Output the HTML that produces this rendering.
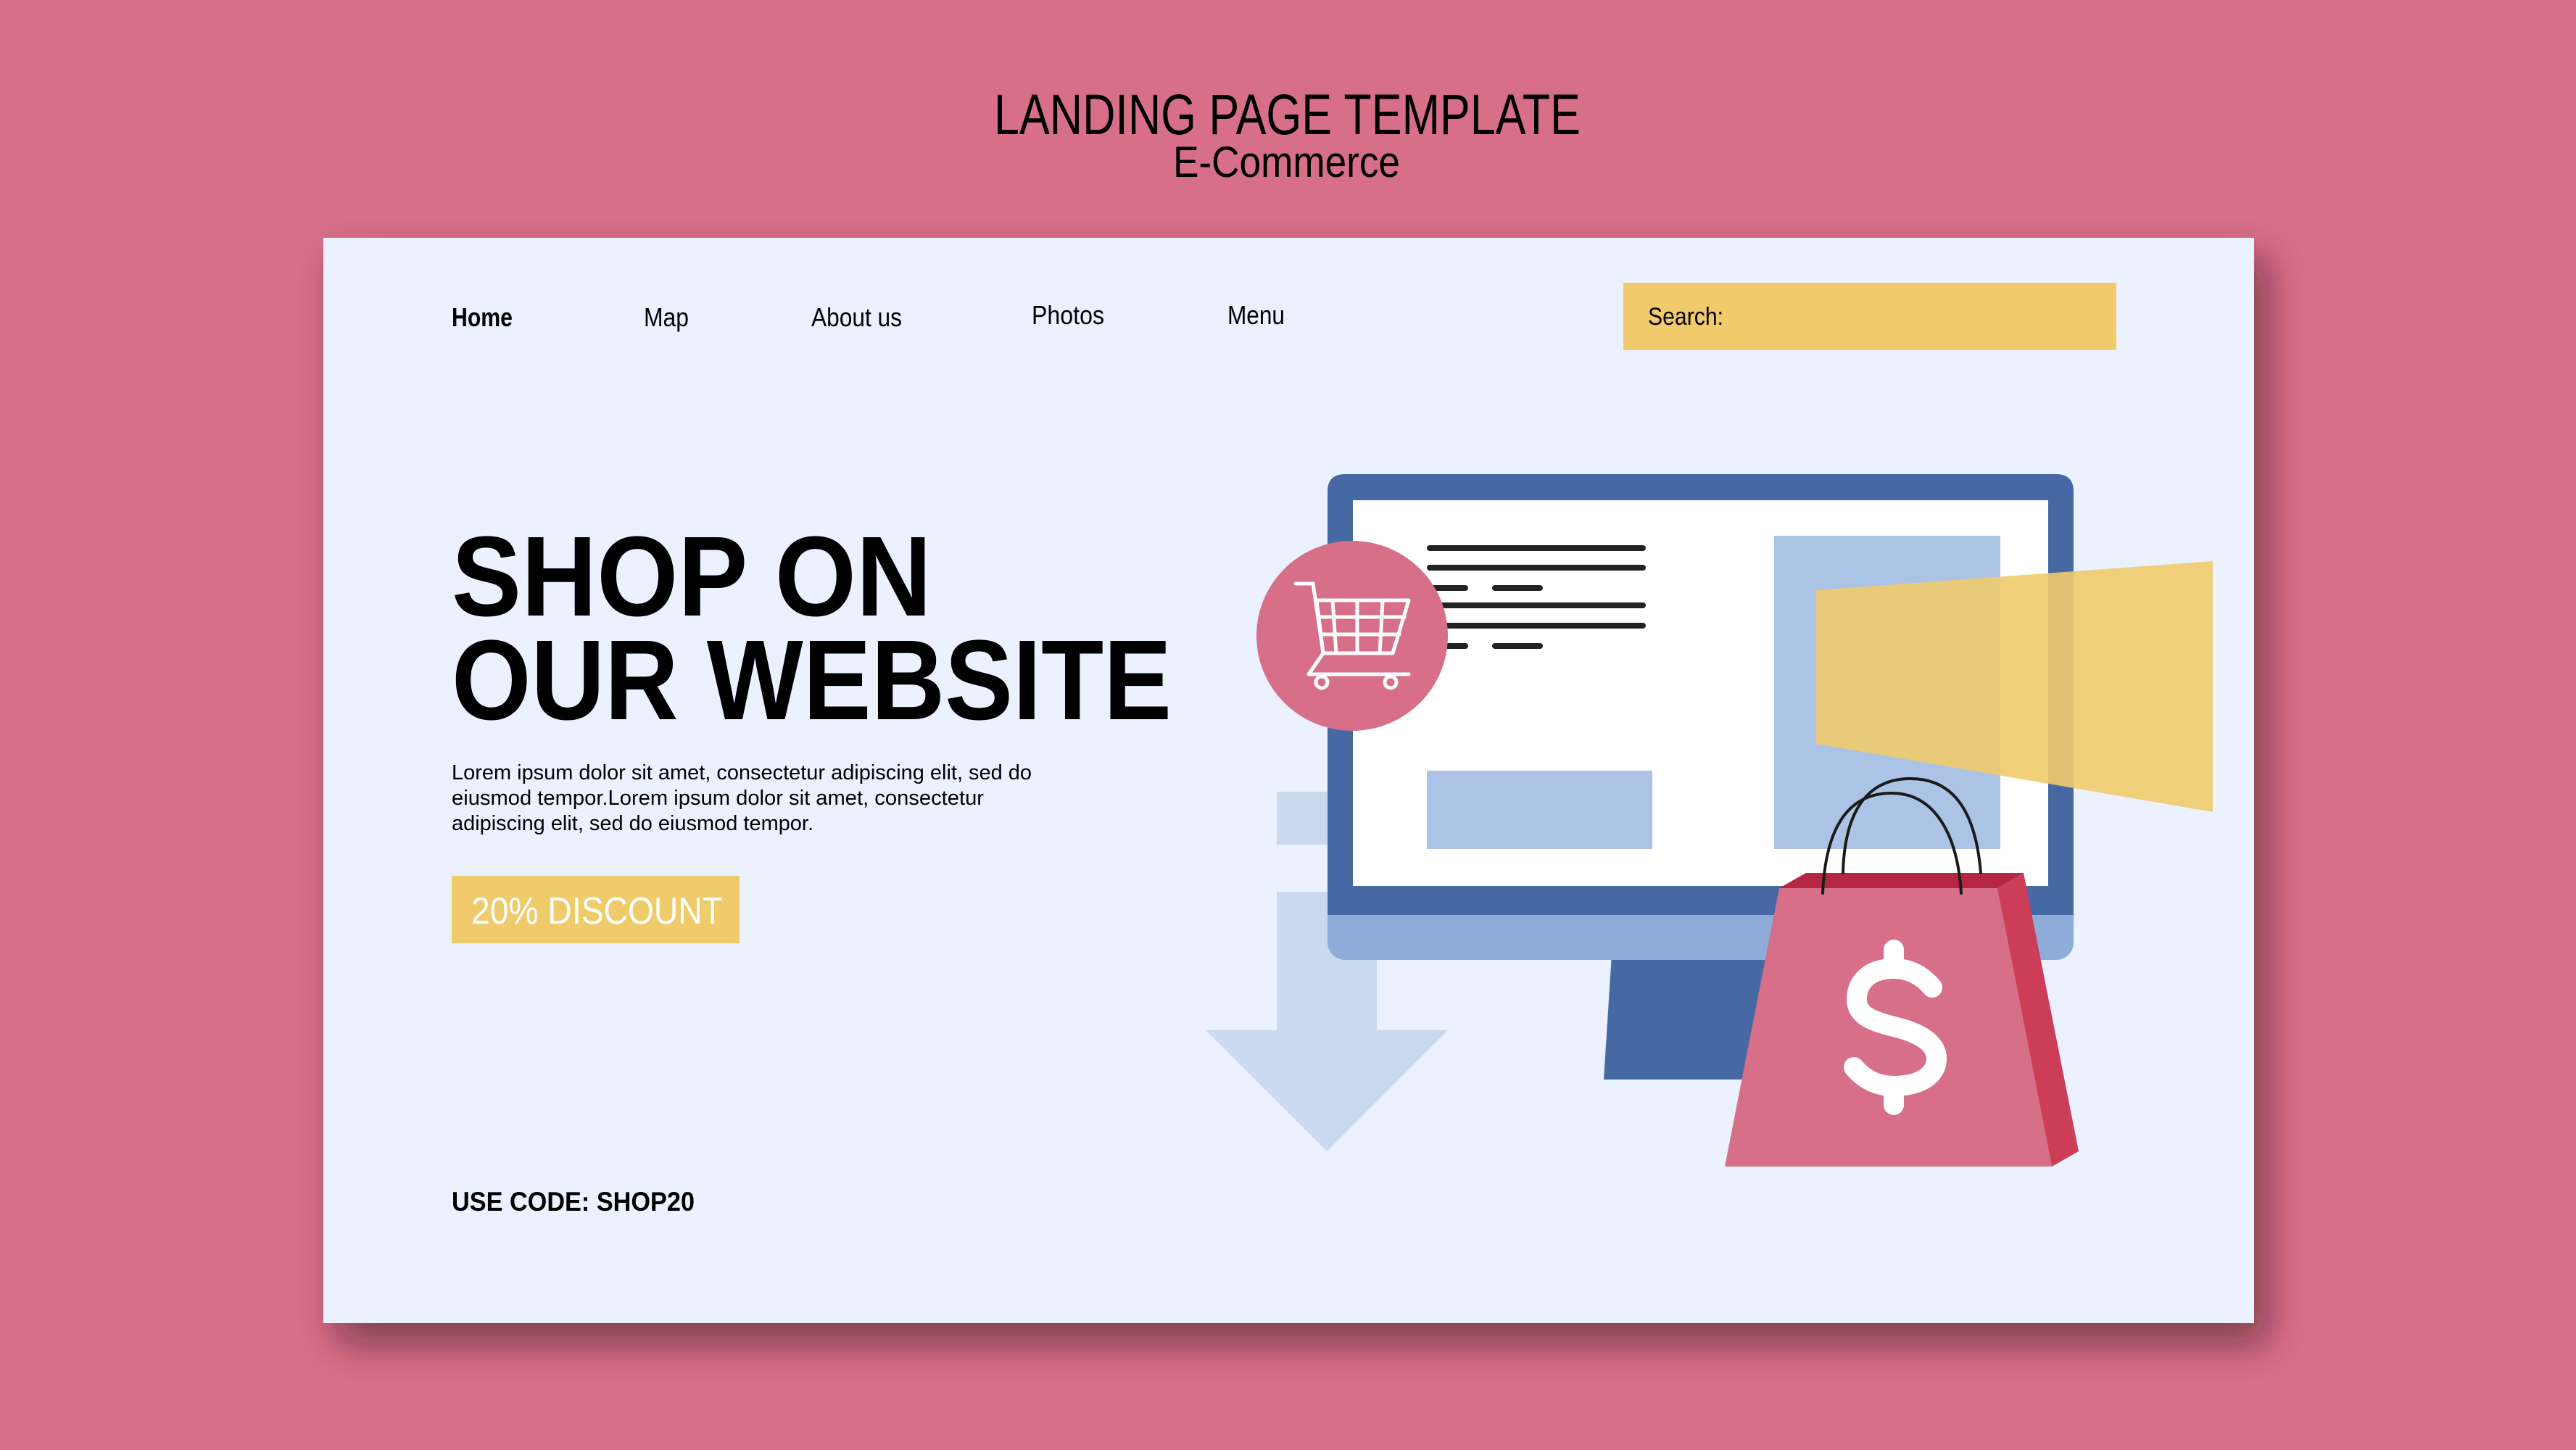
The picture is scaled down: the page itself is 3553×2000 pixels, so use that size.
<!DOCTYPE html>
<html><head><meta charset="utf-8"><style>html,body{margin:0;padding:0;background:#d76f88}svg{display:block}</style></head><body>
<svg width="3553" height="2000" viewBox="0 0 3553 2000" xmlns="http://www.w3.org/2000/svg" font-family="Liberation Sans, sans-serif">
<defs>
<filter id="sh" x="-10%" y="-10%" width="130%" height="130%"><feDropShadow dx="18" dy="28" stdDeviation="26" flood-color="#3a0f1e" flood-opacity="0.55"/></filter>
</defs>
<rect width="3553" height="2000" fill="#d76f88"/>
<text x="1371" y="185" font-size="79" fill="#000" textLength="809" lengthAdjust="spacingAndGlyphs">LANDING PAGE TEMPLATE</text>
<text x="1618" y="244" font-size="60" fill="#000" textLength="313" lengthAdjust="spacingAndGlyphs">E-Commerce</text>
<rect x="446" y="328" width="2663" height="1497" fill="#ebf1fe" filter="url(#sh)"/>
<g font-size="36" fill="#000">
<text x="623" y="450" font-weight="bold" textLength="84" lengthAdjust="spacingAndGlyphs">Home</text>
<text x="888" y="450" textLength="62" lengthAdjust="spacingAndGlyphs">Map</text>
<text x="1119" y="450" textLength="125" lengthAdjust="spacingAndGlyphs">About us</text>
<text x="1423" y="447" textLength="100" lengthAdjust="spacingAndGlyphs">Photos</text>
<text x="1693" y="447" textLength="79" lengthAdjust="spacingAndGlyphs">Menu</text>
</g>
<rect x="2239" y="390" width="680" height="93" fill="#f0cb6b"/>
<text x="2273" y="448" font-size="34" fill="#000" textLength="104" lengthAdjust="spacingAndGlyphs">Search:</text>
<g font-size="157" font-weight="bold" fill="#000">
<text x="623" y="849" textLength="662" lengthAdjust="spacingAndGlyphs">SHOP ON</text>
<text x="623" y="992" textLength="993" lengthAdjust="spacingAndGlyphs">OUR WEBSITE</text>
</g>
<g font-size="29" fill="#000">
<text x="623" y="1075" textLength="800" lengthAdjust="spacingAndGlyphs">Lorem ipsum dolor sit amet, consectetur adipiscing elit, sed do</text>
<text x="623" y="1110" textLength="734" lengthAdjust="spacingAndGlyphs">eiusmod tempor.Lorem ipsum dolor sit amet, consectetur</text>
<text x="623" y="1145" textLength="499" lengthAdjust="spacingAndGlyphs">adipiscing elit, sed do eiusmod tempor.</text>
</g>
<rect x="623" y="1208" width="397" height="93" fill="#f0cb6b"/>
<text x="650" y="1274" font-size="52" fill="#fff" textLength="347" lengthAdjust="spacingAndGlyphs">20% DISCOUNT</text>
<text x="623" y="1670" font-size="37" font-weight="bold" fill="#000" textLength="335" lengthAdjust="spacingAndGlyphs">USE CODE: SHOP20</text>
<g fill="#cbd9ef">
<rect x="1761" y="1092" width="90" height="73"/>
<rect x="1761" y="1230" width="138" height="192"/>
<polygon points="1663,1421 1997,1421 1830,1588"/>
</g>
<polygon points="2224,1300 2445,1300 2445,1489 2212,1489" fill="#4669a3"/>
<rect x="1831" y="654" width="1029" height="670" rx="24" fill="#8fabd8"/>
<path d="M1855 654 H2836 Q2860 654 2860 678 V1262 H1831 V678 Q1831 654 1855 654 Z" fill="#4669a3"/>
<rect x="1866" y="690" width="959" height="532" fill="#fff"/>
<g stroke="#222" stroke-width="8" stroke-linecap="round">
<line x1="1972" y1="756" x2="2266" y2="756"/>
<line x1="1972" y1="783" x2="2266" y2="783"/>
<line x1="1972" y1="811" x2="2021" y2="811"/>
<line x1="2062" y1="811" x2="2124" y2="811"/>
<line x1="1972" y1="835" x2="2266" y2="835"/>
<line x1="1972" y1="863" x2="2266" y2="863"/>
<line x1="1972" y1="891" x2="2021" y2="891"/>
<line x1="2062" y1="891" x2="2124" y2="891"/>
</g>
<rect x="1968" y="1063" width="311" height="108" fill="#abc3e5"/>
<rect x="2447" y="739" width="312" height="432" fill="#abc3e5"/>
<polygon points="2505,814 3052,774 3052,1120 2505,1026" fill="#f0cb6b" opacity="0.9"/>
<ellipse cx="1865" cy="877" rx="132" ry="131" fill="#d66f87"/>
<g stroke="#fff" stroke-width="5" fill="none" stroke-linecap="round" stroke-linejoin="round">
<polyline points="1787,805 1811,805 1825,901 1805,930 1943,930"/>
<polygon points="1816,828 1943,828 1921,901 1825,901"/>
<line x1="1838" y1="828" x2="1843" y2="901"/>
<line x1="1872" y1="828" x2="1872" y2="901"/>
<line x1="1907" y1="828" x2="1903" y2="901"/>
<line x1="1820" y1="851" x2="1937" y2="851"/>
<line x1="1822" y1="875" x2="1930" y2="875"/>
<circle cx="1823" cy="941" r="8"/>
<circle cx="1918" cy="941" r="8"/>
</g>
<polygon points="2454,1225 2491,1204 2791,1204 2755,1225" fill="#b52544"/>
<polygon points="2755,1225 2791,1204 2867,1588 2830,1609" fill="#cc3d58"/>
<polygon points="2454,1225 2755,1225 2830,1609 2379,1609" fill="#d66f87"/>
<g stroke="#1a1a1a" stroke-width="4" fill="none" stroke-linecap="round">
<path d="M2514 1232 C2518 1140 2550 1094 2609 1094 C2668 1094 2700 1150 2705 1232"/>
<path d="M2542 1204 C2544 1120 2575 1074 2635 1074 C2695 1074 2725 1120 2732 1204"/>
</g>
<g stroke="#fff" stroke-width="28" fill="none" stroke-linecap="round" stroke-linejoin="round">
<path d="M2665 1362 C2650 1344 2632 1336 2612 1336 C2578 1336 2561 1355 2561 1378 C2561 1400 2580 1408 2612 1416 C2650 1425 2671 1440 2671 1460 C2671 1485 2645 1498 2612 1498 C2590 1498 2572 1490 2557 1472"/>
<line x1="2612" y1="1310" x2="2612" y2="1336"/>
<line x1="2612" y1="1498" x2="2612" y2="1524"/>
</g>
</svg>
</body></html>
